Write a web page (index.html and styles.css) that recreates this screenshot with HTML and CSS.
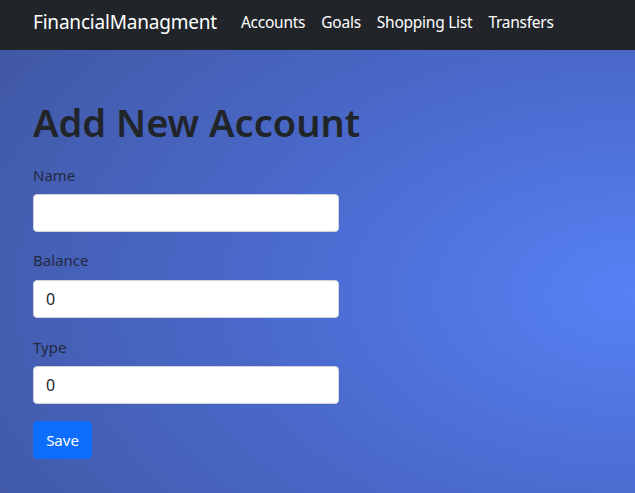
FILE: index.html
```html
<!DOCTYPE html>
<html lang="en">
<head>
<meta charset="utf-8">
<title>FinancialManagment</title>
<link rel="stylesheet" href="styles.css">
</head>
<body>
<nav class="navbar">
  <a class="brand" href="#">FinancialManagment</a>
  <ul class="nav">
    <li><a class="nav-link" href="#">Accounts</a></li>
    <li><a class="nav-link" href="#">Goals</a></li>
    <li><a class="nav-link" href="#">Shopping List</a></li>
    <li><a class="nav-link" href="#">Transfers</a></li>
  </ul>
</nav>
<main class="main">
  <h1 class="title">Add New Account</h1>
  <form class="form">
    <div class="group">
      <label class="label" for="name">Name</label>
      <input class="input" id="name" type="text" value="">
    </div>
    <div class="group">
      <label class="label" for="balance">Balance</label>
      <input class="input" id="balance" type="text" value="0">
    </div>
    <div class="group">
      <label class="label" for="type">Type</label>
      <input class="input" id="type" type="text" value="0">
    </div>
    <button class="btn" type="button">Save</button>
  </form>
</main>
</body>
</html>
```

FILE: styles.css
```css
* { box-sizing: border-box; }
html, body { height: 100%; }
body {
  margin: 0;
  font-family: "Noto Sans", "Open Sans", sans-serif;
  font-size: 16px;
  line-height: 1.5;
  color: #212529;
  display: flex;
  flex-direction: column;
  background: #3b4f8f;
}
.navbar {
  background: #212529;
  height: 50px;
  display: flex;
  align-items: center;
  padding: 0 33px 5px;
  flex-shrink: 0;
}
.brand {
  color: #fff;
  text-decoration: none;
  font-size: 19px;
  margin-right: 16px;
  letter-spacing: -0.2px;
}
.nav {
  list-style: none;
  margin: 0;
  padding: 0;
  display: flex;
}
.nav-link {
  display: block;
  color: #fff;
  text-decoration: none;
  font-size: 15.5px;
  padding: 8px 8px;
  letter-spacing: -0.25px;
}
.main {
  flex: 1;
  padding: 50px 33px 0;
  background: radial-gradient(ellipse 150% 130% at 100% 55%, #5781f5 0%, #4a69cb 40%, #3b4f8f 100%);
}
.title {
  margin: 0 0 18px;
  font-size: 38px;
  font-weight: 600;
  line-height: 1.2;
  color: #212529;
}
.group { margin-bottom: 17px; }
.group:nth-child(2) { margin-bottom: 18px; }
.label {
  display: block;
  margin-bottom: 8px;
  font-size: 15px;
  color: #232a40;
}
.input {
  display: block;
  width: 306px;
  height: 38px;
  padding: 6px 12px;
  font: inherit;
  font-size: 16px;
  color: #212529;
  background: #fff;
  border: 1px solid #ced4da;
  border-radius: 4px;
}
.btn {
  display: block;
  width: 59px;
  height: 38px;
  font: inherit;
  font-size: 15px;
  color: #fff;
  background: #0d6efd;
  border: 1px solid #0d6efd;
  border-radius: 4px;
  padding: 0;
}
```
